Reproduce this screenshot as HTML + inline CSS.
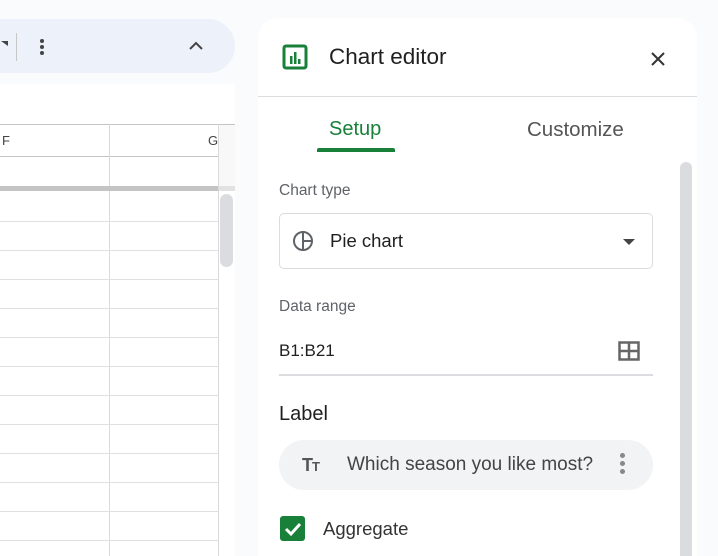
<!DOCTYPE html>
<html style="overflow:hidden;width:718px;height:556px"><head><style>
*{margin:0;padding:0;box-sizing:border-box}
body{width:718px;height:556px;overflow:hidden;background:#f9fbfd;font-family:"Liberation Sans",Arial,sans-serif;position:relative}
.a{position:absolute}
</style></head><body>
<div class="a" style="left:-30px;top:19px;width:265px;height:54px;border-radius:27px;background:#edf2fa"></div>
<div class="a" style="left:1px;top:41px;width:0;height:0;border-left:7px solid transparent;border-top:5px solid #444"></div>
<div class="a" style="left:16px;top:33px;width:1px;height:28px;background:#c7c7c7"></div>
<div class="a" style="left:40px;top:39px;width:4px;height:4px;border-radius:2px;background:#444;box-shadow:0 6px 0 #444,0 12px 0 #444"></div>
<svg class="a" style="left:188px;top:40px" width="16" height="12"><path d="M2 9 L8 3 L14 9" stroke="#444" stroke-width="2" fill="none"/></svg>
<div class="a" style="left:0;top:84px;width:235px;height:472px;background:#fff"></div>
<div class="a" style="left:0;top:124px;width:235px;height:1px;background:#c4c4c4"></div>
<div class="a" style="left:0;top:124px;width:218px;height:33px;border-bottom:1px solid #c4c4c4"></div>
<div class="a" style="left:109px;top:124px;width:1px;height:432px;background:#dadada"></div>
<div class="a" style="left:218px;top:124px;width:1px;height:432px;background:#dadada"></div>
<div class="a" style="left:2px;top:133px;font-size:13px;color:#444">F</div>
<div class="a" style="left:208px;top:133px;font-size:13px;color:#444">G</div>
<div class="a" style="left:219px;top:125px;width:16px;height:61px;background:#f8f8f8"></div>
<div class="a" style="left:0;top:186px;width:218px;height:5px;background:#c4c4c4"></div>
<div class="a" style="left:219px;top:186px;width:16px;height:5px;background:#e2e2e2"></div>
<div class="a" style="left:220px;top:194px;width:13px;height:73px;border-radius:7px;background:#dadce0"></div>
<div class="a" style="left:0;top:221px;width:218px;height:320px;background:repeating-linear-gradient(to bottom,#e0e0e0 0,#e0e0e0 1px,transparent 1px,transparent 29px)"></div>
<div class="a" style="left:258px;top:18px;width:439px;height:538px;background:#fff;border-radius:20px 20px 0 0"></div>
<svg class="a" style="left:282px;top:44px" width="28" height="28" viewBox="0 0 28 28"><rect x="2" y="2" width="22" height="22" rx="2" fill="none" stroke="#188038" stroke-width="3"/><rect x="8" y="12" width="2.5" height="8" fill="#188038"/><rect x="12" y="8" width="2.5" height="12" fill="#188038"/><rect x="16" y="15" width="2.5" height="5" fill="#188038"/></svg>
<div class="a" style="left:329px;top:44px;font-size:22.5px;color:#1f1f1f">Chart editor</div>
<svg class="a" style="left:651px;top:52px" width="14" height="14"><path d="M1 1L13 13M13 1L1 13" stroke="#333" stroke-width="2"/></svg>
<div class="a" style="left:258px;top:96px;width:439px;height:1px;background:#dadce0"></div>
<div class="a" style="left:329px;top:118px;font-size:20px;color:#188038">Setup</div>
<div class="a" style="left:317px;top:148px;width:78px;height:4px;border-radius:2px 2px 0 0;background:#188038"></div>
<div class="a" style="left:527px;top:118px;font-size:20.5px;color:#555">Customize</div>
<div class="a" style="left:680px;top:162px;width:12px;height:400px;border-radius:6px 6px 0 0;background:#dadce0"></div>
<div class="a" style="left:279px;top:182px;font-size:15.5px;color:#5f6368">Chart type</div>
<div class="a" style="left:279px;top:213px;width:374px;height:56px;border:1px solid #dadce0;border-radius:5px"></div>
<svg class="a" style="left:292px;top:230px" width="22" height="22"><circle cx="11" cy="11" r="9" fill="none" stroke="#5f6368" stroke-width="2"/><path d="M11 2V20M11 11H20" stroke="#5f6368" stroke-width="2"/></svg>
<div class="a" style="left:330px;top:230px;font-size:18.5px;color:#1f1f1f">Pie chart</div>
<div class="a" style="left:623px;top:239px;border-left:6px solid transparent;border-right:6px solid transparent;border-top:6px solid #444"></div>
<div class="a" style="left:279px;top:298px;font-size:15.5px;color:#5f6368">Data range</div>
<div class="a" style="left:279px;top:341px;font-size:17px;color:#1f1f1f">B1:B21</div>
<svg class="a" style="left:618px;top:341px" width="22" height="20"><rect x="1.5" y="1.5" width="19" height="17" fill="none" stroke="#666" stroke-width="2.5"/><path d="M11 1V19M1 10H21" stroke="#666" stroke-width="2.5"/></svg>
<div class="a" style="left:279px;top:374px;width:374px;height:2px;background:#dadce0"></div>
<div class="a" style="left:279px;top:403px;font-size:20px;color:#1f1f1f">Label</div>
<div class="a" style="left:279px;top:440px;width:374px;height:50px;border-radius:25px;background:#f1f3f4"></div>
<div class="a" style="left:302px;top:455px;font-size:18px;font-weight:bold;color:#555;letter-spacing:-1px">T<span style="font-size:13px">T</span></div>
<div class="a" style="left:347px;top:454px;font-size:19px;color:#444">Which season you like most?</div>
<div class="a" style="left:620px;top:453px;width:5px;height:5px;border-radius:3px;background:#888;box-shadow:0 8px 0 #888,0 16px 0 #888"></div>
<div class="a" style="left:280px;top:516px;width:25px;height:25px;border-radius:3px;background:#188038"></div>
<svg class="a" style="left:280px;top:516px" width="25" height="25"><path d="M6 13L11 18L20 8" stroke="#fff" stroke-width="3" fill="none"/></svg>
<div class="a" style="left:323px;top:518px;font-size:18.5px;color:#333">Aggregate</div>
</body></html>
